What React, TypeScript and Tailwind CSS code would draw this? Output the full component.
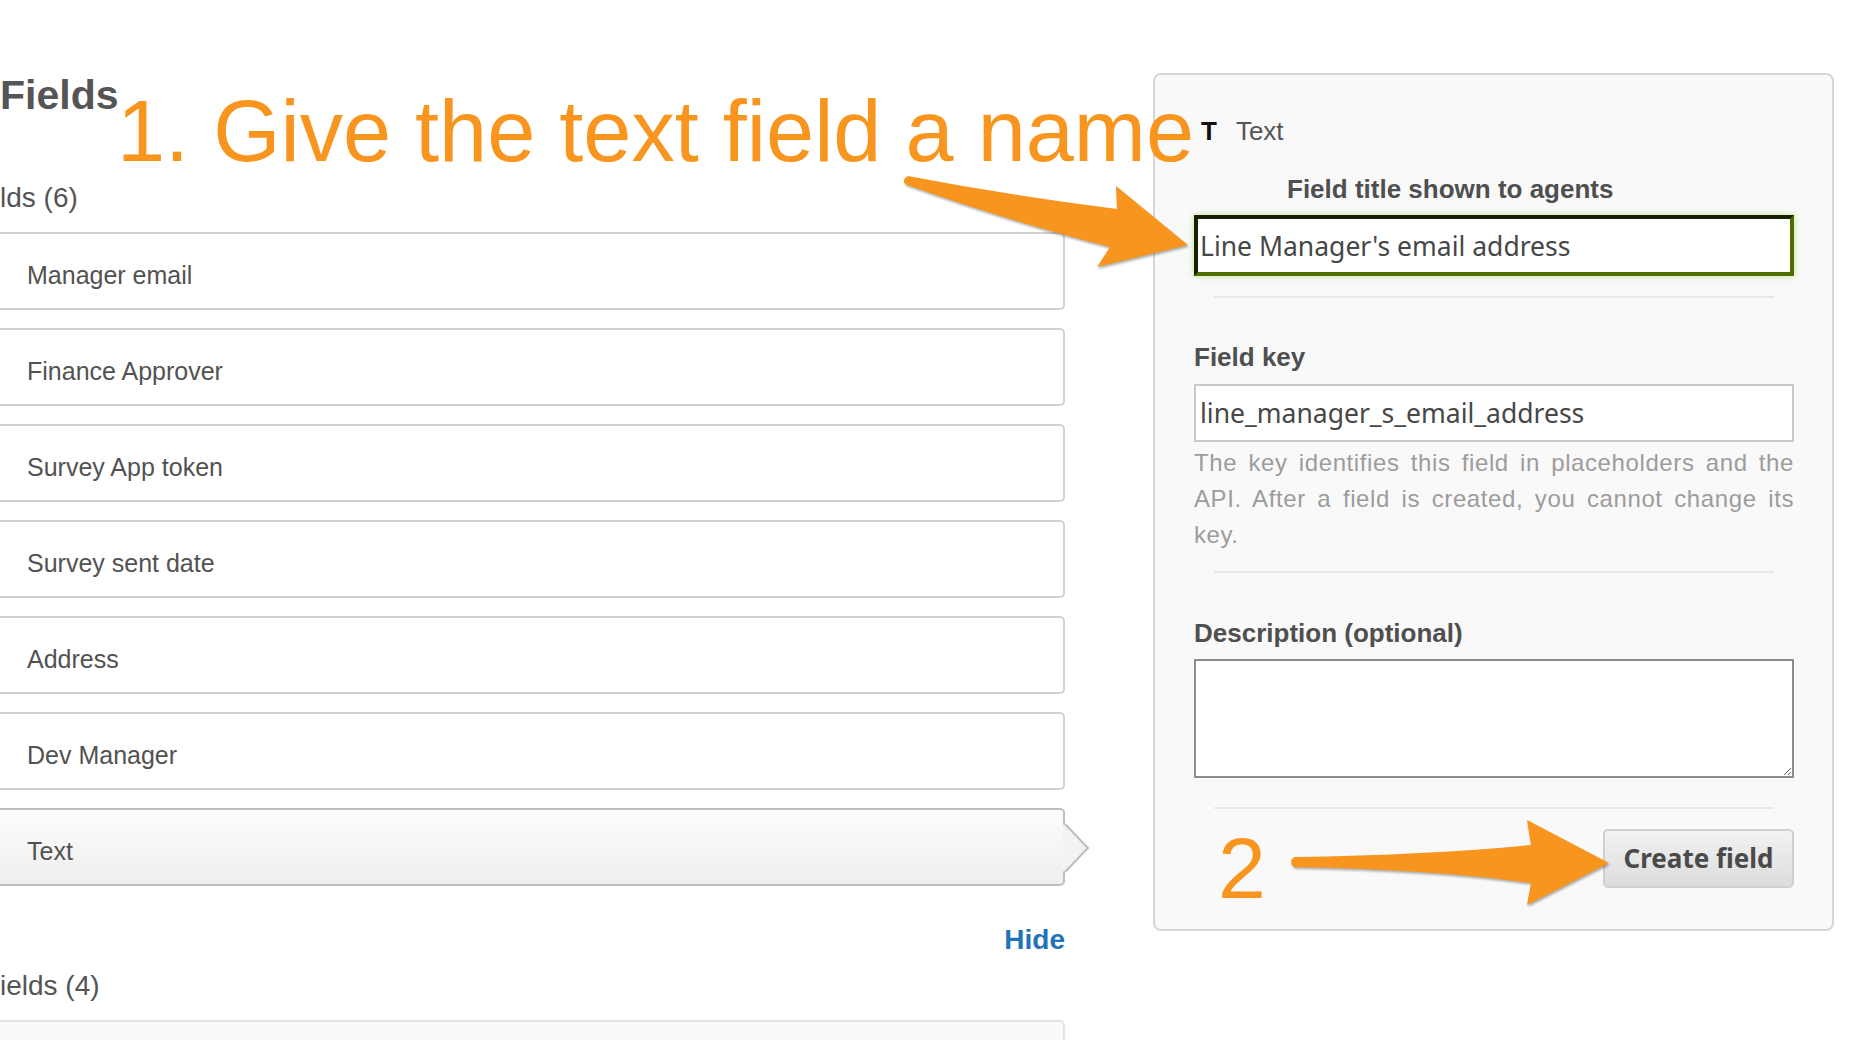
import React from 'react';

const fields = [
    'Manager email',
    'Finance Approver',
    'Survey App token',
    'Survey sent date',
    'Address',
    'Dev Manager',
];

function FieldRow({ label, selected }: { label: string; selected?: boolean }) {
    if (selected) {
        return (
            <div className="relative h-[78px] flex items-center pt-[10px] pl-[27px] border-2 border-l-0 border-[#bfbfbf] rounded-r-[5px] bg-linear-to-b from-[#fdfdfd] to-[#eeeeee] text-[25px] text-[#525252]">
                {label}
                {/* pointer towards the editor */}
                <svg className="absolute left-full top-[-2px]" width="28" height="78" viewBox="0 0 28 78">
                    <polygon points="0,17 2,16 25,40 2,64 0,63" fill="#f3f3f3" />
                    <polyline points="2,16 25,40 2,64" fill="none" stroke="#bdbdbd" strokeWidth="2" />
                </svg>
            </div>
        );
    }
    return (
        <div className="h-[78px] flex items-center pt-[10px] pl-[27px] border-2 border-l-0 border-[#d2d2d2] rounded-r-[5px] bg-white text-[25px] text-[#525252]">
            {label}
        </div>
    );
}

function FieldList() {
    return (
        <div className="w-[1065px] shrink-0 pt-[75px]">
            <h1 className="text-[41px] leading-[41px] font-bold text-[#555555]">Fields</h1>
            <div className="mt-[68px] text-[28px] leading-[28px] text-[#555555]">lds (6)</div>

            <div className="mt-[20px] flex flex-col gap-[18px]">
                {fields.map((f) => (
                    <FieldRow key={f} label={f} />
                ))}
                <FieldRow label="Text" selected />
            </div>

            <div className="mt-[40px] text-right text-[28px] leading-[28px] font-bold text-[#1f73b7]">Hide</div>
            <div className="mt-[18px] text-[28px] leading-[28px] text-[#555555]">ields (4)</div>
            <div className="mt-[20px] h-[78px] border-2 border-l-0 border-[#e4e4e4] rounded-r-[5px] bg-[#fafafa]" />
        </div>
    );
}

function Divider({ className }: { className: string }) {
    return <div className={`mx-[20px] h-[2px] bg-[#e8e8e8] ${className}`} />;
}

function EditorPanel() {
    return (
        <div className="ml-[88px] mt-[73px] w-[681px] h-[858px] shrink-0 border-2 border-[#d6d6d6] rounded-[8px] bg-[#f9f9f9] pl-[39px] pr-[38px] pt-[43px] flex flex-col">
            {/* header */}
            <div className="flex items-center h-[26px] text-[26px] leading-[26px]">
                <span className="ml-[7px] font-bold text-[#111111]">T</span>
                <span className="ml-[19px] text-[#555555]">Text</span>
            </div>

            <label className="mt-[32px] ml-[93px] text-[26px] leading-[26px] font-bold text-[#4f4f4f]">
                Field title shown to agents
            </label>
            <input
                readOnly
                value="Line Manager's email address"
                className="mt-[13px] h-[61px] w-full border-4 border-t-[#172000] border-l-[#172000] border-r-[#4f6d00] border-b-[#4f6d00] bg-white pl-[2px] font-['Noto_Sans',sans-serif] text-[26.5px] text-[#474747] shadow-[0_0_6px_rgba(150,200,50,0.55)] outline-none"
            />

            <Divider className="mt-[20px]" />

            <label className="mt-[46px] text-[26px] leading-[26px] font-bold text-[#4f4f4f]">Field key</label>
            <input
                readOnly
                value="line_manager_s_email_address"
                className="mt-[14px] h-[58px] w-full border-2 border-[#c9c9c9] bg-white pl-[4px] font-['Noto_Sans',sans-serif] text-[26.5px] text-[#474747] outline-none"
            />
            <div className="mt-[3px] text-[24px] leading-[36px] tracking-[0.6px] text-[#9c9c9c]">
                <div className="text-justify [text-align-last:justify]">The key identifies this field in placeholders and the</div>
                <div className="text-justify [text-align-last:justify]">API. After a field is created, you cannot change its</div>
                <div>key.</div>
            </div>

            <Divider className="mt-[18px]" />

            <label className="mt-[47px] text-[26px] leading-[26px] font-bold text-[#4f4f4f]">Description (optional)</label>
            <textarea className="mt-[13px] h-[119px] w-full border-2 border-[#8c8c8c] bg-white outline-none" />

            <Divider className="mt-[29px]" />

            <button className="mt-[20px] self-end h-[59px] w-[191px] rounded-[5px] border-2 border-[#d0d0d0] bg-linear-to-b from-[#f2f2f2] to-[#dcdcdc] font-['Noto_Sans',sans-serif] text-[26px] font-bold text-[#4a4a4a]">
                Create field
            </button>
        </div>
    );
}

function Annotations() {
    return (
        <>
            <div className="absolute left-[117px] top-[88px] whitespace-nowrap text-[86.5px] leading-[86px] text-[#f7951f]">
                1. Give the text field a name
            </div>
            <div className="absolute left-[1218px] top-[825px] text-[86px] leading-[86px] text-[#f7951f]">2</div>
            <svg
                className="absolute left-0 top-0 pointer-events-none"
                width="1870"
                height="1040"
                viewBox="0 0 1870 1040"
                style={{ filter: 'drop-shadow(1px 2px 1px rgba(0,0,0,0.3))' }}
            >
                <path
                    d="M 908 176 Q 1012 196 1117 209 L 1116 186 L 1188 245 L 1097 267 L 1110 247 Q 1012 222 907 185 Q 900 181 908 176 Z"
                    fill="#f7951f"
                />
                <path
                    d="M 1294 857 Q 1430 855 1531 845 L 1527 820 L 1609 863 L 1527 905 L 1531 883 Q 1430 869 1294 867 Q 1288 862 1294 857 Z"
                    fill="#f7951f"
                />
            </svg>
        </>
    );
}

export default function App() {
    return (
        <div className="relative w-[1870px] h-[1040px] overflow-hidden bg-white font-['Liberation_Sans',Arial,sans-serif]">
            <div className="flex items-start">
                <FieldList />
                <EditorPanel />
            </div>
            <Annotations />
        </div>
    );
}
